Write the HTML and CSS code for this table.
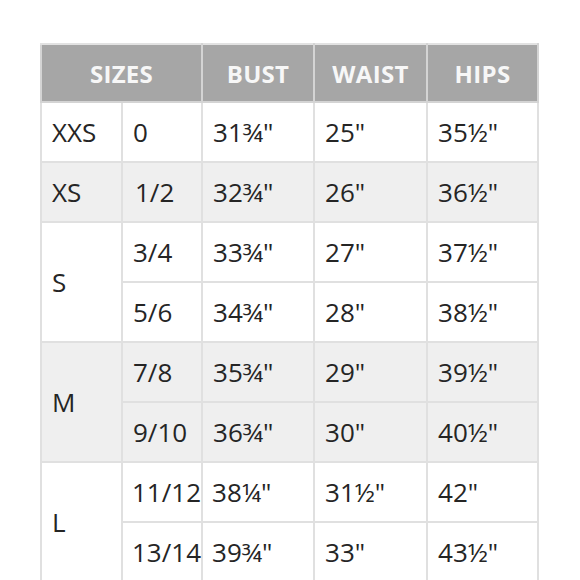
FILE: index.html
```html
<!DOCTYPE html>
<html>
<head>
<meta charset="utf-8">
<link rel="stylesheet" href="styles.css">
</head>
<body>
<table class="chart">
  <colgroup>
    <col class="c1"><col class="c2"><col class="c3"><col class="c4"><col class="c5">
  </colgroup>
  <thead>
    <tr class="head">
      <th colspan="2">SIZES</th>
      <th>BUST</th>
      <th>WAIST</th>
      <th>HIPS</th>
    </tr>
  </thead>
  <tbody>
    <tr class="white">
      <td>XXS</td><td>0</td><td>31¾"</td><td>25"</td><td>35½"</td>
    </tr>
    <tr class="grey">
      <td>XS</td><td class="ind">1/2</td><td>32¾"</td><td>26"</td><td>36½"</td>
    </tr>
    <tr class="white">
      <td rowspan="2">S</td><td>3/4</td><td>33¾"</td><td>27"</td><td>37½"</td>
    </tr>
    <tr class="white">
      <td>5/6</td><td>34¾"</td><td>28"</td><td>38½"</td>
    </tr>
    <tr class="grey">
      <td rowspan="2">M</td><td>7/8</td><td>35¾"</td><td>29"</td><td>39½"</td>
    </tr>
    <tr class="grey">
      <td>9/10</td><td>36¾"</td><td>30"</td><td>40½"</td>
    </tr>
    <tr class="white">
      <td rowspan="2">L</td><td class="tight">11/12</td><td class="tight">38¼"</td><td>31½"</td><td>42"</td>
    </tr>
    <tr class="white">
      <td class="tight">13/14</td><td class="tight">39¾"</td><td>33"</td><td>43½"</td>
    </tr>
  </tbody>
</table>
</body>
</html>
```

FILE: styles.css
```css
html, body {
  margin: 0;
  padding: 0;
  background: #ffffff;
}

body {
  padding: 43px 0 0 40px;
  font-family: "Open Sans", "DejaVu Sans", sans-serif;
}

.chart {
  border-collapse: collapse;
  table-layout: fixed;
  width: 497px;
}

.c1 { width: 81px; }
.c2 { width: 80px; }
.c3 { width: 112px; }
.c4 { width: 113px; }
.c5 { width: 111px; }

.chart th,
.chart td {
  border: 2px solid #e0e0e0;
  padding: 0;
}

.head th {
  background: #a6a6a6;
  color: #f7f7f7;
  font-weight: 700;
  font-size: 24px;
  height: 56px;
  text-align: center;
  border-color: #d4d4d4;
  border-top-color: #e2e2e2;
  letter-spacing: 0.3px;
}

.chart td {
  height: 58px;
  font-size: 26px;
  color: #252525;
  padding-left: 10px;
  white-space: nowrap;
  overflow: visible;
}

.chart td.ind { padding-left: 12px; }
.chart td.tight { padding-left: 9px; }

.white td { background: #ffffff; }
.grey td { background: #efefef; }
```
